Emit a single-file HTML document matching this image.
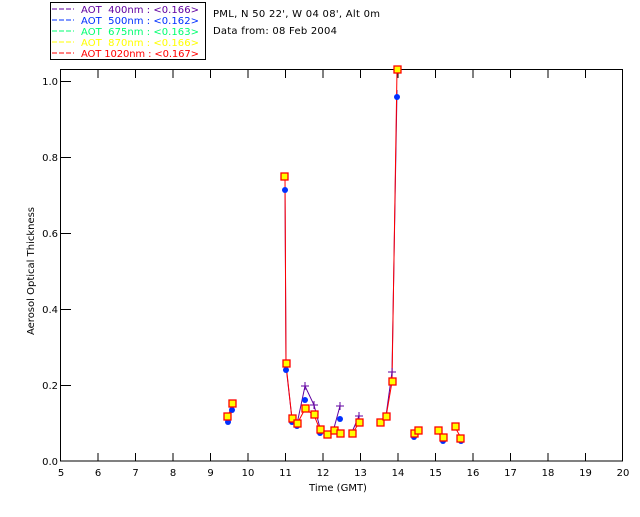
<!DOCTYPE html>
<html><head><style>
body{margin:0;background:#fff;}
svg text{font-family:"DejaVu Sans","Liberation Sans",sans-serif;font-size:10px;white-space:pre;}
</style></head><body>
<svg width="640" height="512" xmlns="http://www.w3.org/2000/svg" xml:space="preserve">
<rect width="640" height="512" fill="#fff"/>
<!-- legend -->
<rect x="50.5" y="2.5" width="155" height="57" fill="none" stroke="#000"/>
<g font-size="10">
<line x1="52" y1="9" x2="74" y2="9" stroke="#6000a0" stroke-dasharray="5,2"/><text x="81" y="13" fill="#6000a0" textLength="118">AOT  400nm : &lt;0.166&gt;</text>
<line x1="52" y1="20" x2="74" y2="20" stroke="#0030ff" stroke-dasharray="5,2"/><text x="81" y="24" fill="#0030ff" textLength="118">AOT  500nm : &lt;0.162&gt;</text>
<line x1="52" y1="31" x2="74" y2="31" stroke="#00ff70" stroke-dasharray="5,2"/><text x="81" y="35" fill="#00ff70" textLength="118">AOT  675nm : &lt;0.163&gt;</text>
<line x1="52" y1="42" x2="74" y2="42" stroke="#ffff00" stroke-dasharray="5,2"/><text x="81" y="46" fill="#ffff00" textLength="118">AOT  870nm : &lt;0.166&gt;</text>
<line x1="52" y1="53" x2="74" y2="53" stroke="#ff0000" stroke-dasharray="5,2"/><text x="81" y="57" fill="#ff0000" textLength="118">AOT 1020nm : &lt;0.167&gt;</text>
</g>
<text x="213" y="17" fill="#000" textLength="167">PML, N 50 22', W 04 08', Alt 0m</text>
<text x="213" y="34" fill="#000" textLength="124">Data from: 08 Feb 2004</text>
<!-- axes -->
<rect x="60.5" y="69.5" width="562" height="391.5" fill="none" stroke="#000"/>
<g stroke="#000">
<line x1="98" y1="461" x2="98" y2="453"/><line x1="98" y1="70" x2="98" y2="78"/>
<line x1="135.5" y1="461" x2="135.5" y2="453"/><line x1="135.5" y1="70" x2="135.5" y2="78"/>
<line x1="173" y1="461" x2="173" y2="453"/><line x1="173" y1="70" x2="173" y2="78"/>
<line x1="210.5" y1="461" x2="210.5" y2="453"/><line x1="210.5" y1="70" x2="210.5" y2="78"/>
<line x1="248" y1="461" x2="248" y2="453"/><line x1="248" y1="70" x2="248" y2="78"/>
<line x1="285.5" y1="461" x2="285.5" y2="453"/><line x1="285.5" y1="70" x2="285.5" y2="78"/>
<line x1="323" y1="461" x2="323" y2="453"/><line x1="323" y1="70" x2="323" y2="78"/>
<line x1="360.5" y1="461" x2="360.5" y2="453"/><line x1="360.5" y1="70" x2="360.5" y2="78"/>
<line x1="398" y1="461" x2="398" y2="453"/><line x1="398" y1="70" x2="398" y2="78"/>
<line x1="435.5" y1="461" x2="435.5" y2="453"/><line x1="435.5" y1="70" x2="435.5" y2="78"/>
<line x1="473" y1="461" x2="473" y2="453"/><line x1="473" y1="70" x2="473" y2="78"/>
<line x1="510.5" y1="461" x2="510.5" y2="453"/><line x1="510.5" y1="70" x2="510.5" y2="78"/>
<line x1="548" y1="461" x2="548" y2="453"/><line x1="548" y1="70" x2="548" y2="78"/>
<line x1="585.5" y1="461" x2="585.5" y2="453"/><line x1="585.5" y1="70" x2="585.5" y2="78"/>
<line x1="60" y1="81.5" x2="71" y2="81.5"/><line x1="60" y1="157.5" x2="71" y2="157.5"/>
<line x1="60" y1="233.5" x2="71" y2="233.5"/><line x1="60" y1="309.5" x2="71" y2="309.5"/>
<line x1="60" y1="385.5" x2="71" y2="385.5"/>
</g>
<g text-anchor="middle">
<text x="61" y="476">5</text><text x="98" y="476">6</text><text x="135.5" y="476">7</text><text x="173" y="476">8</text>
<text x="210.5" y="476">9</text><text x="248" y="476">10</text><text x="285.5" y="476">11</text><text x="323" y="476">12</text>
<text x="360.5" y="476">13</text><text x="398" y="476">14</text><text x="435.5" y="476">15</text><text x="473" y="476">16</text>
<text x="510.5" y="476">17</text><text x="548" y="476">18</text><text x="585.5" y="476">19</text><text x="623" y="476">20</text>
<text x="338" y="491">Time (GMT)</text>
</g>
<g text-anchor="end">
<text x="58" y="85">1.0</text><text x="58" y="161">0.8</text><text x="58" y="237">0.6</text>
<text x="58" y="313">0.4</text><text x="58" y="389">0.2</text><text x="58" y="465">0.0</text>
</g>
<text transform="translate(34,271) rotate(-90)" text-anchor="middle" font-size="9">Aerosol Optical Thickness</text>
<!-- data lines -->
<polyline fill="none" stroke="#6000a0" points="285,188 286,366 292,419 297,424 305,386 314,405 320,428 327,434 334,428 340,406"/>
<polyline fill="none" stroke="#6000a0" points="352,432 359,416"/>
<polyline fill="none" stroke="#6000a0" points="380,423 386,416 392,372 397,90"/>
<polyline fill="none" stroke="#ff0000" points="285,177 286,364 292,419 297,424 305,409 314,415 320,430 327,435 334,431 340,434"/>
<polyline fill="none" stroke="#ff0000" points="352,434 359,423"/>
<polyline fill="none" stroke="#ff0000" points="380,423 386,417 392,382 397,70"/>
<polyline fill="none" stroke="#ff0000" points="228,417 232,404"/>
<polyline fill="none" stroke="#ff0000" points="414,433 418,431"/>
<polyline fill="none" stroke="#ff0000" points="438,431 441,437 443,438"/>
<polyline fill="none" stroke="#ff0000" points="455,427 461,438"/>
<g stroke="#6000a0">
<path d="M301,386h8M305,382v8M310,405h8M314,401v8M336,406h8M340,402v8M355,416h8M359,412v8M388,372h8M392,368v8"/>
</g>
<g fill="#0030ff">
<circle cx="285" cy="190" r="3"/><circle cx="286" cy="370" r="3"/><circle cx="305" cy="400" r="3"/><circle cx="340" cy="419" r="3"/>
<circle cx="397" cy="97" r="3"/><circle cx="228" cy="422" r="3"/><circle cx="232" cy="410" r="3"/><circle cx="292" cy="422" r="3"/><circle cx="297" cy="426" r="3"/>
<circle cx="414" cy="437" r="3"/><circle cx="443" cy="441" r="3"/><circle cx="461" cy="441" r="3"/><circle cx="320" cy="433" r="3"/>
</g>
<g fill="#ffff00" stroke="#ff0000" stroke-width="1.3">
<rect x="224" y="413" width="7" height="7"/><rect x="229" y="400" width="7" height="7"/>
<rect x="281" y="173" width="7" height="7"/><rect x="283" y="360" width="7" height="7"/>
<rect x="289" y="415" width="7" height="7"/><rect x="294" y="420" width="7" height="7"/>
<rect x="302" y="405" width="7" height="7"/><rect x="311" y="411" width="7" height="7"/>
<rect x="317" y="426" width="7" height="7"/><rect x="324" y="431" width="7" height="7"/>
<rect x="331" y="427" width="7" height="7"/><rect x="337" y="430" width="7" height="7"/>
<rect x="349" y="430" width="7" height="7"/><rect x="356" y="419" width="7" height="7"/>
<rect x="377" y="419" width="7" height="7"/><rect x="383" y="413" width="7" height="7"/>
<rect x="389" y="378" width="7" height="7"/><rect x="394" y="66" width="7" height="7"/>
<rect x="411" y="430" width="7" height="7"/><rect x="415" y="427" width="7" height="7"/>
<rect x="435" y="427" width="7" height="7"/><rect x="440" y="434" width="7" height="7"/>
<rect x="452" y="423" width="7" height="7"/><rect x="457" y="435" width="7" height="7"/>
</g>
</svg>
</body></html>
